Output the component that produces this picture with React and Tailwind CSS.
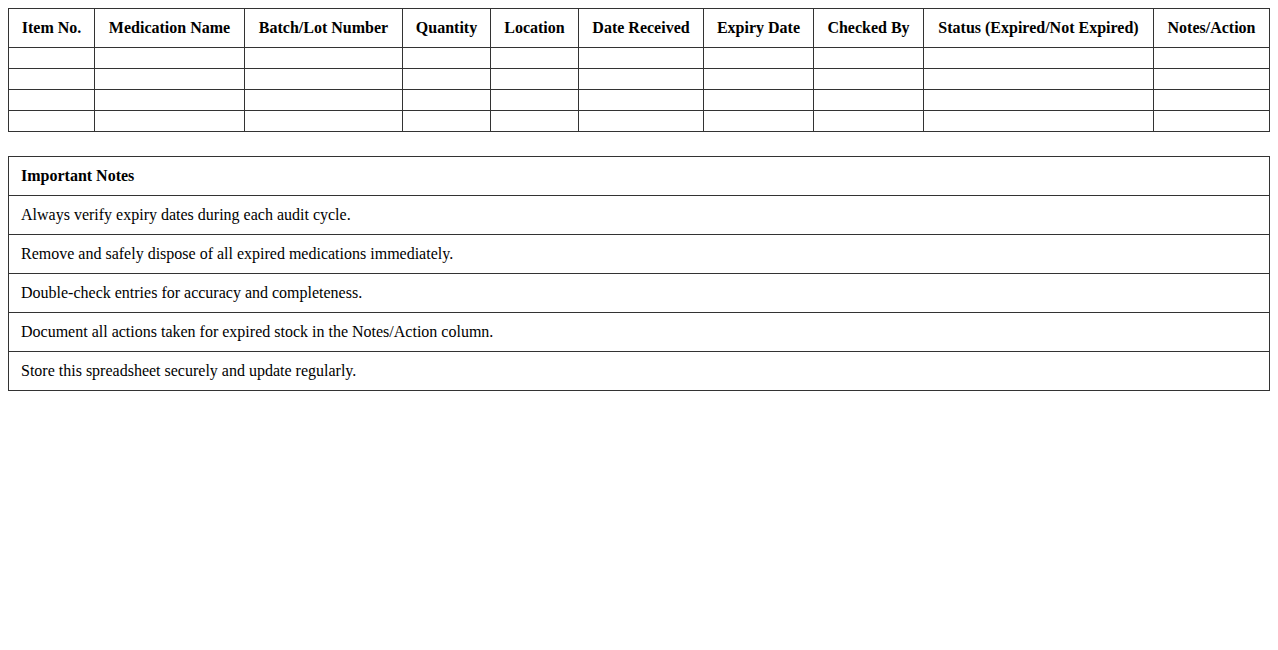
import React from 'react';

const columns = [
  { label: 'Item No.', w: 'w-[86px]' },
  { label: 'Medication Name', w: 'w-[150px]' },
  { label: 'Batch/Lot Number', w: 'w-[158px]' },
  { label: 'Quantity', w: 'w-[88px]' },
  { label: 'Location', w: 'w-[88px]' },
  { label: 'Date Received', w: 'w-[125px]' },
  { label: 'Expiry Date', w: 'w-[110px]' },
  { label: 'Checked By', w: 'w-[110px]' },
  { label: 'Status (Expired/Not Expired)', w: 'w-[230px]' },
  { label: 'Notes/Action', w: '' },
];

const notes = [
  'Always verify expiry dates during each audit cycle.',
  'Remove and safely dispose of all expired medications immediately.',
  'Double-check entries for accuracy and completeness.',
  'Document all actions taken for expired stock in the Notes/Action column.',
  'Store this spreadsheet securely and update regularly.',
];

const App = () => {
  return (
    <div className="p-2 bg-white text-black text-[16px] leading-[18px]" style={{ fontFamily: '"Liberation Serif", "Times New Roman", serif' }}>
      <table className="w-full border-collapse table-fixed mb-6">
        <thead>
          <tr>
            {columns.map((c) => (
              <th key={c.label} className={`${c.w} border border-[#333] px-3 py-[10px] font-bold text-center whitespace-nowrap`}>
                {c.label}
              </th>
            ))}
          </tr>
        </thead>
        <tbody>
          {[0, 1, 2, 3].map((r) => (
            <tr key={r}>
              {columns.map((c) => (
                <td key={c.label} className="border border-[#333] px-3 py-[10px] h-[21px]"></td>
              ))}
            </tr>
          ))}
        </tbody>
      </table>

      <table className="w-full border-collapse">
        <thead>
          <tr>
            <th className="border border-[#333] px-3 py-[10px] font-bold text-left">Important Notes</th>
          </tr>
        </thead>
        <tbody>
          {notes.map((n) => (
            <tr key={n}>
              <td className="border border-[#333] px-3 py-[10px] text-left">{n}</td>
            </tr>
          ))}
        </tbody>
      </table>
    </div>
  );
};

export default App;
